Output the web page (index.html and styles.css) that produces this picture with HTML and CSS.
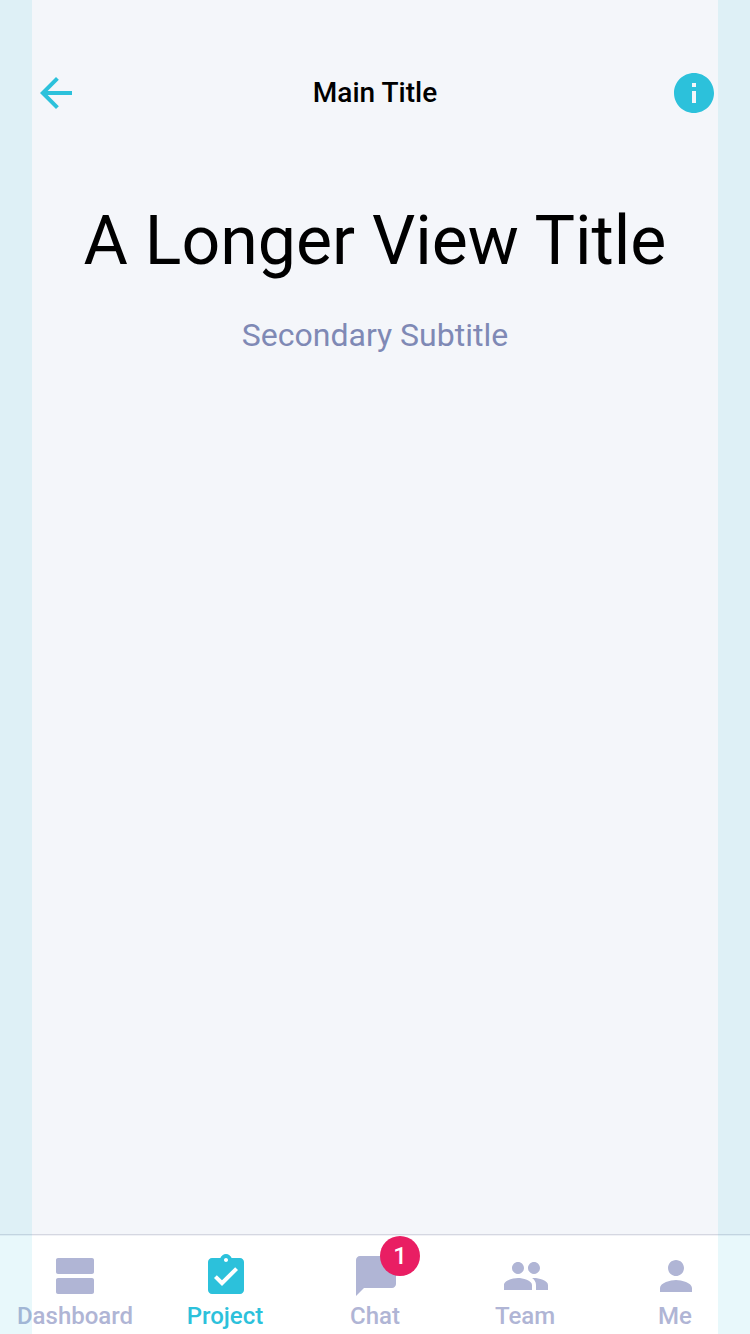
FILE: index.html
```html
<!DOCTYPE html>
<html lang="en">
<head>
<meta charset="utf-8">
<meta name="viewport" content="width=device-width, initial-scale=1">
<title>Main Title</title>
<link rel="stylesheet" href="styles.css">
</head>
<body>
<div class="screen">
  <header class="app-bar">
    <button class="icon-button" type="button" aria-label="Back">
      <svg class="icon" viewBox="0 0 24 24" aria-hidden="true"><path d="M20 11H7.83l5.59-5.59L12 4l-8 8 8 8 1.41-1.41L7.83 13H20v-2z"/></svg>
    </button>
    <div class="app-bar-title">Main Title</div>
    <button class="icon-button" type="button" aria-label="Information">
      <svg class="icon" viewBox="0 0 24 24" aria-hidden="true"><path d="M12 2C6.48 2 2 6.48 2 12s4.480 10 10 10 10-4.480 10-10S17.520 2 12 2zm1 15h-2v-6h2v6zm0-8h-2V7h2v2z"/></svg>
    </button>
  </header>
  <main class="content">
    <h1 class="title">A Longer View Title</h1>
    <p class="subtitle">Secondary Subtitle</p>
  </main>
  <nav class="tabs" aria-label="Main">
    <a class="tab" href="#dashboard">
      <span class="tab-icon"><svg class="icon" viewBox="0 0 24 24" aria-hidden="true"><path d="M20 13H3c-.55 0-1 .45-1 1v6c0 .55.45 1 1 1h17c.55 0 1-.45 1-1v-6c0-.55-.45-1-1-1zm0-10H3c-.55 0-1 .45-1 1v6c0 .55.45 1 1 1h17c.55 0 1-.45 1-1V4c0-.55-.45-1-1-1z"/></svg></span>
      <span>Dashboard</span>
    </a>
    <a class="tab tab-active" href="#project" aria-current="page">
      <span class="tab-icon"><svg class="icon" viewBox="0 0 24 24" aria-hidden="true"><path d="M19 3h-4.180C14.400 1.840 13.300 1 12 1c-1.300 0-2.400.84-2.820 2H5c-1.100 0-2 .9-2 2v14c0 1.100.9 2 2 2h14c1.100 0 2-.9 2-2V5c0-1.100-.9-2-2-2zm-7 0c.55 0 1 .45 1 1s-.45 1-1 1-1-.45-1-1 .45-1 1-1zm-2 14l-4-4 1.410-1.410L10 14.170l6.590-6.590L18 9l-8 8z"/></svg></span>
      <span>Project</span>
    </a>
    <a class="tab" href="#chat">
      <span class="tab-icon"><svg class="icon" viewBox="0 0 24 24" aria-hidden="true"><path d="M20 2H4c-1.100 0-2 .9-2 2v18l4-4h14c1.100 0 2-.9 2-2V4c0-1.100-.9-2-2-2z"/></svg><span class="badge">1</span></span>
      <span>Chat</span>
    </a>
    <a class="tab" href="#team">
      <span class="tab-icon"><svg class="icon" viewBox="0 0 24 24" aria-hidden="true"><path d="M16 11c1.660 0 2.990-1.340 2.990-3S17.660 5 16 5c-1.660 0-3 1.340-3 3s1.340 3 3 3zm-8 0c1.660 0 2.990-1.340 2.990-3S9.660 5 8 5C6.340 5 5 6.340 5 8s1.340 3 3 3zm0 2c-2.330 0-7 1.170-7 3.500V19h14v-2.500c0-2.330-4.670-3.500-7-3.500zm8 0c-.29 0-.62.020-.97.050 1.160.84 1.970 1.970 1.970 3.450V19h6v-2.500c0-2.330-4.670-3.500-7-3.500z"/></svg></span>
      <span>Team</span>
    </a>
    <a class="tab" href="#me">
      <span class="tab-icon"><svg class="icon" viewBox="0 0 24 24" aria-hidden="true"><path d="M12 12c2.210 0 4-1.790 4-4s-1.790-4-4-4-4 1.790-4 4 1.790 4 4 4zm0 2c-2.670 0-8 1.340-8 4v2h16v-2c0-2.660-5.330-4-8-4z"/></svg></span>
      <span>Me</span>
    </a>
  </nav>
</div>
</body>
</html>
```

FILE: styles.css
```css
* {
  box-sizing: border-box;
}

body {
  margin: 0;
  background: #f4f6fa;
  color: #000;
  font-family: Roboto, "Liberation Sans", sans-serif;
}

.screen {
  position: relative;
  display: flex;
  flex-direction: column;
  min-height: 100vh;
}

/* Tinted side gutters, laid over the content and the tab bar */
.screen::before,
.screen::after {
  content: "";
  position: absolute;
  top: 0;
  bottom: 0;
  z-index: 1;
  width: 32px;
  background: rgba(44, 193, 219, 0.11);
  pointer-events: none;
}

.screen::before {
  left: 0;
}

.screen::after {
  right: 0;
}

.icon {
  display: block;
  width: 48px;
  height: 48px;
  fill: currentColor;
}

.app-bar {
  display: flex;
  align-items: center;
  justify-content: space-between;
  padding: 69px 32px 0;
}

.icon-button {
  padding: 0;
  border: 0;
  background: none;
  color: #2cc1db;
  cursor: pointer;
}

.app-bar-title {
  font-size: 28px;
  font-weight: 500;
  line-height: 48px;
}

.content {
  flex: 1;
  padding: 84px 32px 0;
  text-align: center;
}

.title {
  margin: 0;
  font-size: 68px;
  font-weight: 400;
  line-height: 80px;
}

.subtitle {
  margin: 34px 0 0;
  color: #7f89b5;
  font-size: 32px;
  line-height: 40px;
}

.tabs {
  display: grid;
  grid-template-columns: repeat(5, 1fr);
  border-top: 1px solid #d5d7e1;
  background: #fff;
  box-shadow: inset 0 1px #f1f2f6;
}

.tab {
  display: flex;
  flex-direction: column;
  align-items: center;
  padding: 17px 0 2px;
  color: #b0b5d5;
  font-size: 24px;
  font-weight: 500;
  line-height: 32px;
  text-decoration: none;
}

.tab-active {
  color: #2cc1db;
}

.tab-icon {
  position: relative;
  margin-left: 2px;
}

.badge {
  position: absolute;
  top: -16px;
  left: 28px;
  width: 40px;
  height: 40px;
  border-radius: 50%;
  background: #e91e63;
  color: #fff;
  line-height: 40px;
  text-align: center;
}
```
